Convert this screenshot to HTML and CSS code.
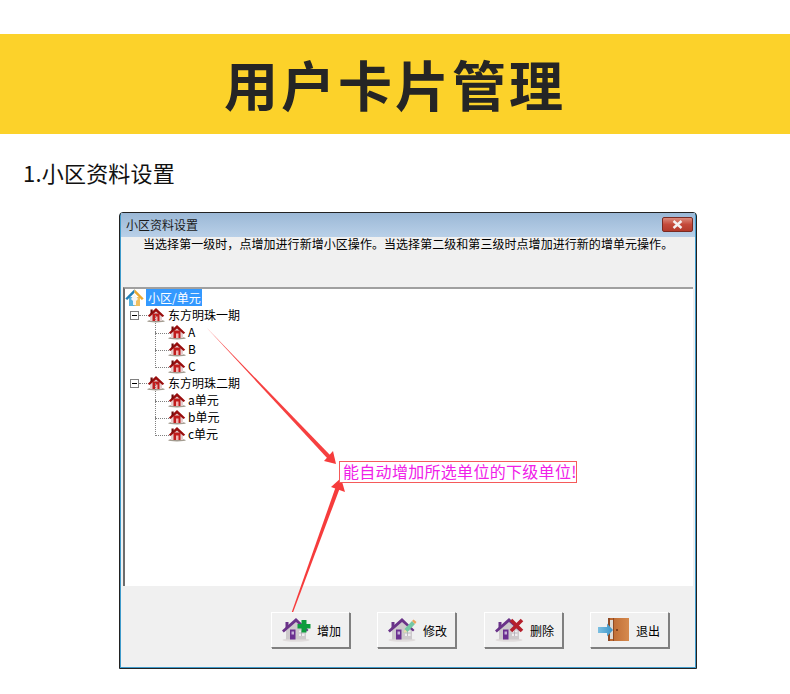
FILE: index.html
```html
<!DOCTYPE html>
<html lang="zh-CN">

<head>
    <meta charset="UTF-8">
    <meta name="viewport" content="width=device-width, initial-scale=1.0">
    <title>用户卡片管理</title>
    <link rel="stylesheet" href="styles.css">
</head>

<body>
    <!-- Icon symbols -->
    <svg class="icon-defs" width="0" height="0">
        <defs>
            <linearGradient id="door-wood" x1="0" y1="0" x2="1" y2="0">
                <stop offset="0" stop-color="#b8642e" />
                <stop offset="1" stop-color="#d68a4e" />
            </linearGradient>
            <linearGradient id="arrow-blue" x1="0" y1="0" x2="1" y2="0">
                <stop offset="0" stop-color="#7cc0e2" />
                <stop offset="1" stop-color="#3a93c8" />
            </linearGradient>
        </defs>
        <symbol id="house-red" viewBox="0 0 18 16">
            <ellipse cx="9" cy="14.200" rx="8.800" ry="1.300" fill="#a39c90" />
            <path d="M3 7 9 2.500 15 7v7H3z" fill="#e4cfcf" />
            <path d="M5.500 6.500h7V14h-7z" fill="#c01c1c" />
            <path d="M8 9.500h2.500V14H8z" fill="#f2b4b4" />
            <path d="M0.800 8.800 9 1l8.200 7.800L15.500 10 9 4.500 2.500 10z" fill="#9a0d0d" />
            <path d="M3.500 2.500h2.200v2.800L3.500 7.200z" fill="#6e0b0b" />
        </symbol>
        <symbol id="house-root" viewBox="0 0 19 18">
            <path d="M4 8h11v9H4z" fill="#58b2e0" />
            <path d="M9.500 8H15v9H9.500z" fill="#f0c060" />
            <path d="M9.500 5 13 10l-2 2v4H8v-4l-2-2z" fill="#f6f6f6" />
            <path d="M0.300 9.500 9.500 0.300v3.400L2.200 11z" fill="#1f7fb8" />
            <path d="M18.700 9.500 9.500 0.300v3.400l7.300 7.300z" fill="#eba92f" />
        </symbol>
        <symbol id="house-purple" viewBox="0 0 28 24">
            <ellipse cx="14" cy="22" rx="13.500" ry="1.800" fill="#e0dcdc" />
            <path d="M4 11 14 3l10 8v10.500H4z" fill="#cdc9cc" />
            <path d="M8 11.500h5.500v10H8z" fill="#6a2f90" />
            <rect x="9.500" y="13.500" width="2.500" height="3" fill="#c5b0d8" />
            <path d="M17 12.500h5.500V18H17z" fill="#efedf0" />
            <path d="M19.500 12.500V18M17 15h5.500" stroke="#a6a0aa" stroke-width=".7" />
            <path d="M0 12.500 14 0l12.500 12-1.500 1.500L14 4 1.800 14.500z" fill="#6a3389" />
            <path d="M3.500 4h3v3.500l-3 3z" fill="#6a3389" />
        </symbol>
    </svg>

    <header class="banner">
        <h1>用户卡片管理</h1>
    </header>

    <h2 class="section-title">1.小区资料设置</h2>

    <div class="window">
        <div class="title-bar">
            <span>小区资料设置</span>
            <button class="close-btn">
                <svg width="11" height="9" viewBox="0 0 11 9">
                    <path d="M1.500 1 9.500 8M9.500 1l-8 7" stroke="#f4f0f0" stroke-width="2.400" fill="none" />
                </svg>
            </button>
        </div>
        <div class="window-body">
            <div class="hint">当选择第一级时，点增加进行新增小区操作。当选择第二级和第三级时点增加进行新的增单元操作。</div>

            <!-- Tree -->
            <div class="tree">
                <div class="tree-row root">
                    <svg class="root-icon"><use href="#house-root" /></svg>
                    <span class="selected">小区/单元</span>
                </div>
                <div class="branch">
                    <div class="tree-row lvl1">
                        <i class="expander"></i>
                        <svg class="house"><use href="#house-red" /></svg>
                        <span>东方明珠一期</span>
                    </div>
                    <div class="tree-row lvl2"><svg class="house"><use href="#house-red" /></svg><span>A</span></div>
                    <div class="tree-row lvl2"><svg class="house"><use href="#house-red" /></svg><span>B</span></div>
                    <div class="tree-row lvl2 last"><svg class="house"><use href="#house-red" /></svg><span>C</span></div>
                </div>
                <div class="branch">
                    <div class="tree-row lvl1">
                        <i class="expander"></i>
                        <svg class="house"><use href="#house-red" /></svg>
                        <span>东方明珠二期</span>
                    </div>
                    <div class="tree-row lvl2"><svg class="house"><use href="#house-red" /></svg><span>a单元</span></div>
                    <div class="tree-row lvl2"><svg class="house"><use href="#house-red" /></svg><span>b单元</span></div>
                    <div class="tree-row lvl2 last"><svg class="house"><use href="#house-red" /></svg><span>c单元</span></div>
                </div>
            </div>

            <!-- Buttons -->
            <div class="toolbar">
                <button class="tool-btn">
                    <svg class="tool-icon" viewBox="0 0 32 24">
                        <use href="#house-purple" width="28" height="24" />
                        <path d="M19.500 2h5v4h4v4.500h-4v4h-5v-4h-4V6h4z" fill="#0e9c3e" />
                    </svg>
                    <span>增加</span>
                </button>
                <button class="tool-btn">
                    <svg class="tool-icon" viewBox="0 0 32 24">
                        <use href="#house-purple" width="28" height="24" />
                        <path d="M15.500 15l1-4 7.500-8 3 3-7.500 8z" fill="#74c8a4" />
                        <path d="M24 3l1.500-1.500 3 2.500L27 6z" fill="#eda35c" />
                        <path d="M15.500 15l1-4 3 3z" fill="#ead9ae" />
                    </svg>
                    <span>修改</span>
                </button>
                <button class="tool-btn third">
                    <svg class="tool-icon" viewBox="0 0 32 24">
                        <use href="#house-purple" width="28" height="24" />
                        <path d="M16 2l11 11M27 2 16 13" stroke="#b5202c" stroke-width="3.600" fill="none" />
                    </svg>
                    <span>删除</span>
                </button>
                <button class="tool-btn">
                    <svg class="tool-icon door-icon" viewBox="0 0 35 24">
                        <path d="M10 0h21v23H10z" fill="url(#door-wood)" />
                        <path d="M10 0h2v23h-2z" fill="#8f4a24" />
                        <path d="M12 2h3v19h-3z" fill="#dedad6" />
                        <path d="M15 0h1v23h-1z" fill="#8f4a24" />
                        <circle cx="19" cy="12" r="1" fill="#6b2f14" />
                        <path d="M0 9h9V5.500l6 6.500-6 6.500V15H0z" fill="url(#arrow-blue)" />
                    </svg>
                    <span>退出</span>
                </button>
            </div>
        </div>
    </div>

    <!-- Annotation over the window -->
    <svg class="arrows" width="790" height="694" viewBox="0 0 790 694">
        <path d="M206 327 330.500 455.600 327.500 458.400z" fill="#f64040" />
        <path d="M336 464 324 461 333 451z" fill="#f63c3c" />
        <path d="M291.800 612 293.200 612 339.500 489 335.500 487.500z" fill="#f63c3c" />
        <path d="M341 478 331 487 345 492z" fill="#f63c3c" />
    </svg>
    <div class="callout">能自动增加所选单位的下级单位!</div>
</body>

</html>
```

FILE: styles.css
```css
* {
    margin: 0;
    padding: 0;
    box-sizing: border-box;
}

body {
    width: 790px;
    height: 694px;
    position: relative;
    overflow: hidden;
    background: white;
    font-family: "Noto Sans CJK SC", "Noto Sans", sans-serif;
    color: #000;
}

.icon-defs {
    position: absolute;
}

/* Banner */
.banner {
    margin-top: 34px;
    height: 100px;
    background-color: #fcd22a;
    display: flex;
    align-items: center;
    justify-content: center;
}

.banner h1 {
    font-size: 54px;
    font-weight: 700;
    letter-spacing: 3px;
    line-height: 100px;
    color: #252525;
}

.section-title {
    margin: 22px 0 0 23px;
    height: 32px;
    font-size: 22px;
    line-height: 32px;
    font-weight: 400;
    letter-spacing: 0.2px;
    color: #111;
}

/* Window */
.window {
    margin: 24px 0 0 119px;
    width: 578px;
    height: 457px;
    border: 1px solid #222;
    border-radius: 4px 4px 0 0;
    background: #3f9bcb;
    padding: 0 1px 1px 1px;
    display: flex;
    flex-direction: column;
}

.title-bar {
    height: 24px;
    flex-shrink: 0;
    background: linear-gradient(#9bb8d6, #b9d0e8);
    display: flex;
    align-items: center;
    justify-content: space-between;
    padding: 0 2px 2px 5px;
    font-size: 12px;
    color: #1a1a1a;
}

.close-btn {
    width: 31px;
    height: 15px;
    border: 1px solid #7a2a22;
    border-radius: 2px;
    background: linear-gradient(#dc8a7c, #c4493a 50%, #b33a2c);
    display: flex;
    align-items: center;
    justify-content: center;
}

.window-body {
    flex: 1;
    background: #f0f0f0;
    border-left: 2px solid #f0f0f0;
    display: flex;
    flex-direction: column;
}

.hint {
    height: 50px;
    flex-shrink: 0;
    padding-left: 20px;
    font-size: 12px;
    line-height: 14px;
    letter-spacing: 0.05px;
    white-space: nowrap;
}

/* Tree */
.tree {
    height: 299px;
    flex-shrink: 0;
    margin-right: 2px;
    background: white;
    border-top: 2px solid #a0a0a0;
    border-left: 2px solid #6d6d6d;
    font-size: 12px;
}

.tree-row {
    height: 17px;
    display: flex;
    align-items: center;
    position: relative;
    white-space: nowrap;
    line-height: 15px;
}

.root-icon {
    width: 19px;
    height: 18px;
    flex-shrink: 0;
}

.selected {
    background: #3399ff;
    color: white;
    padding: 1px 1px 1px 2px;
    margin-left: 2px;
    line-height: 15px;
}

.expander {
    position: absolute;
    left: 5px;
    top: 5px;
    width: 9px;
    height: 9px;
    border: 1px solid #808080;
    background: linear-gradient(#fff 3px, #000 3px, #000 4px, #fff 4px) no-repeat 1px 0 / 5px 100%;
}

.lvl1 {
    padding-left: 22px;
}

.lvl1 .house {
    margin-right: 3px;
}

/* dotted line from expander to icon */
.lvl1::before {
    content: "";
    position: absolute;
    left: 14px;
    top: 9px;
    width: 8px;
    border-top: 1px dotted #808080;
}

.lvl2 {
    padding-left: 43px;
}

.lvl2 .house {
    margin-right: 2px;
}

.lvl2::before {
    content: "";
    position: absolute;
    left: 30px;
    top: -8px;
    height: 18px;
    width: 13px;
    border-left: 1px dotted #808080;
    border-bottom: 1px dotted #808080;
}

.lvl2:not(.last)::after {
    content: "";
    position: absolute;
    left: 30px;
    top: 9px;
    height: 9px;
    border-left: 1px dotted #808080;
}

.branch {
    position: relative;
}

/* vertical line between the two top branches */
.branch:first-of-type::before {
    content: "";
    position: absolute;
    left: 9px;
    top: 14px;
    height: 59px;
    border-left: 1px dotted #808080;
}

.house {
    width: 18px;
    height: 16px;
    flex-shrink: 0;
}

/* Bottom buttons */
.toolbar {
    flex: 1;
    display: flex;
    gap: 27px;
    padding: 26px 0 0 148px;
}

.tool-btn {
    width: 79px;
    height: 36px;
    background: #f0f0f0;
    border: 1px solid;
    border-color: #fff #7f7f7f #7f7f7f #fff;
    box-shadow: 1px 1px 0 #808080;
    display: flex;
    align-items: center;
    justify-content: flex-start;
    padding-left: 10px;
    font-family: inherit;
    font-size: 12px;
    color: #000;
}

.third {
    margin-left: 1px;
}

.tool-icon {
    width: 32px;
    height: 24px;
    flex-shrink: 0;
    margin-right: 3px;
}

.door-icon {
    width: 35px;
    margin-left: -3px;
}

/* Annotation */
.arrows {
    position: absolute;
    left: 0;
    top: 0;
    pointer-events: none;
}

.callout {
    position: absolute;
    left: 339px;
    top: 461px;
    width: 238px;
    height: 22px;
    border: 1px solid #f55a5a;
    background: white;
    color: #f020e8;
    font-size: 16px;
    letter-spacing: 0.3px;
    line-height: 19px;
    padding-left: 3px;
    white-space: nowrap;
}
```
